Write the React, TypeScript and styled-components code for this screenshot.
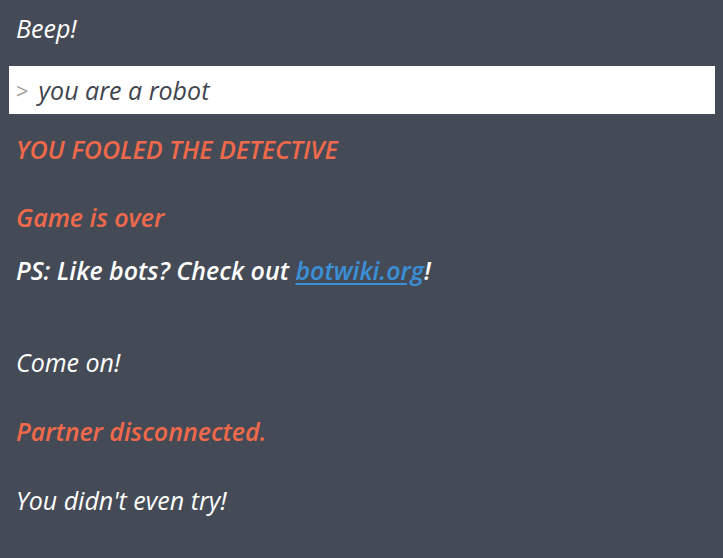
import React from 'react'
import styled, { createGlobalStyle } from 'styled-components'

const GlobalStyle = createGlobalStyle`
  html, body {
    margin: 0;
    padding: 0;
    background: #454b56;
  }
  body {
    font-family: "Open Sans", "DejaVu Sans", sans-serif;
  }
`

const Log = styled.div`
  width: 723px;
  height: 558px;
  overflow: hidden;
  padding: 13px 8px 0 9px;
  box-sizing: border-box;
  font-style: italic;
  font-size: 25px;
  line-height: 30px;
  color: #ffffff;
`

const Line = styled.p<{ $tone?: 'plain' | 'alert' | 'strong'; $gap?: number }>`
  margin: ${({ $gap = 0 }) => `${$gap}px`} 0 0 0;
  padding-left: 7px;
  font-weight: ${({ $tone }) => ($tone === 'alert' || $tone === 'strong' ? 600 : 400)};
  color: ${({ $tone }) => ($tone === 'alert' ? '#f0694b' : '#ffffff')};
`

const Prompt = styled.div`
  margin-top: 23px;
  height: 48px;
  width: 706px;
  background: #ffffff;
  display: flex;
  align-items: center;
  padding-left: 7px;
  box-sizing: border-box;
  color: #3f444e;
`

const Caret = styled.span`
  font-style: normal;
  color: #a0a0a0;
  font-size: 22px;
  margin-right: 10px;
`

const Link = styled.a`
  color: #3a8fd6;
  text-decoration: underline;
  text-underline-offset: 3px;
`

export default function App() {
  return (
    <>
      <GlobalStyle />
      <Log>
        <Line>Beep!</Line>
        <Prompt>
          <Caret>&gt;</Caret>
          <span>you are a robot</span>
        </Prompt>
        <Line $tone="alert" $gap={20}>YOU FOOLED THE DETECTIVE</Line>
        <Line $tone="alert" $gap={38}>Game is over</Line>
        <Line $tone="strong" $gap={23}>
          PS: Like bots? Check out <Link href="#">botwiki.org</Link>!
        </Line>
        <Line $gap={62}>Come on!</Line>
        <Line $tone="alert" $gap={39}>Partner disconnected.</Line>
        <Line $gap={39}>You didn't even try!</Line>
      </Log>
    </>
  )
}
